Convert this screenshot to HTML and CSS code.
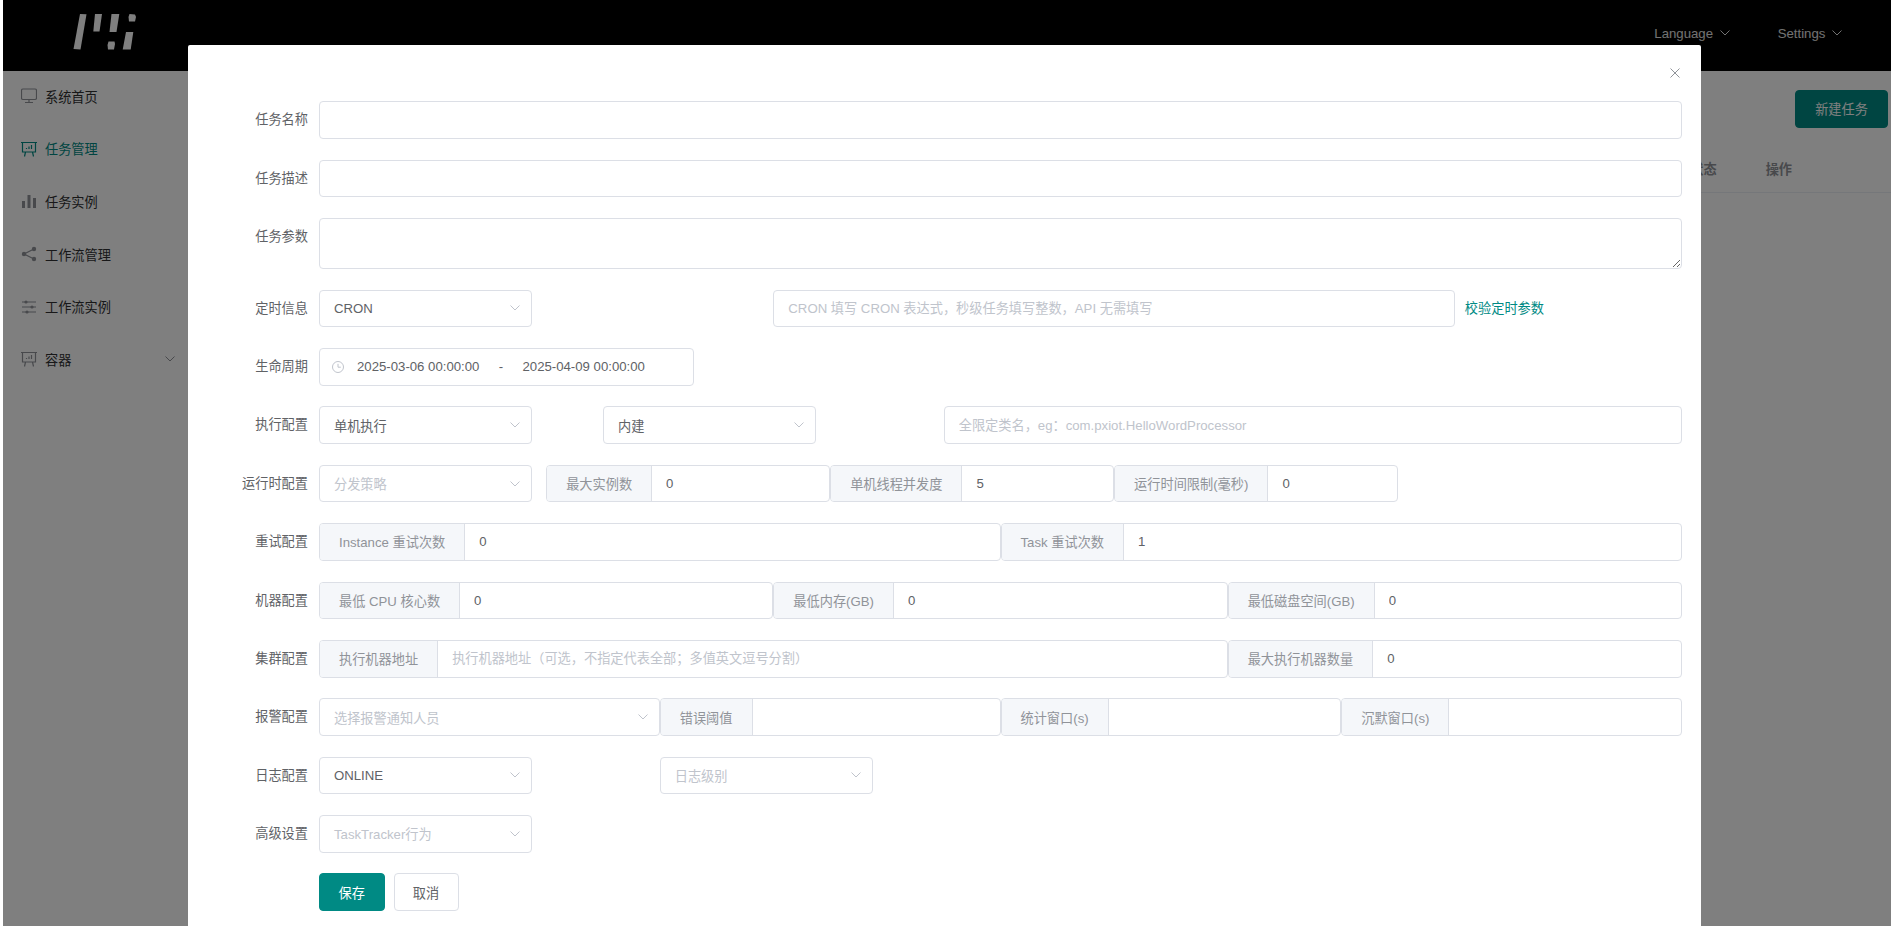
FILE: index.html
```html
<!DOCTYPE html>
<html lang="zh-CN">
<head>
  <meta charset="UTF-8">
  <title>任务管理</title>
  <link rel="stylesheet" href="styles.css">
</head>
<body>
  <!-- top bar -->
  <header class="topbar">
    <svg class="logo" viewBox="0 0 70 40" aria-hidden="true">
      <polygon points="14,0 20.5,0.3 14.5,35.5 7.5,35"/>
      <polygon points="29,0 36,0 33.5,17.5 27.3,17.5"/>
      <polygon points="45.5,0 53.3,0 50.5,18 43.5,18"/>
      <polygon points="63.5,0 69,0.5 70,3 69,7.5 63,7.5 62.5,3"/>
      <polygon points="42.5,27.5 48.5,27.5 49,30 48,35.5 42,35.5 41.5,31"/>
      <polygon points="60,18 67.3,18 64.7,35.5 56.7,35.5"/>
    </svg>
    <nav class="topnav">
      <span class="topnav-item">Language <svg class="chev" viewBox="0 0 10 6"><path d="M0.5 0.5 5 5 9.5 0.5"/></svg></span>
      <span class="topnav-item">Settings <svg class="chev" viewBox="0 0 10 6"><path d="M0.5 0.5 5 5 9.5 0.5"/></svg></span>
    </nav>
  </header>

  <div class="layout">
    <aside class="sidebar">
      <div class="menu-item">
        <svg class="menu-icon" viewBox="0 0 16 16"><rect class="line" x="0.5" y="1" width="15" height="10.5" rx="1.5"/><path class="line" d="M8 11.5V14.5M4 14.5H12"/></svg>
        系统首页
      </div>
      <div class="menu-item active">
        <svg class="menu-icon" viewBox="0 0 16 16"><path class="line" d="M0 1.5H16M1.5 1.5V11H14.5V1.5M4.5 11 3.5 15.5M11.5 11 12.5 15.5"/><path class="line" d="M5.5 8V7M8 8V5.5M10.5 8V4"/></svg>
        任务管理
      </div>
      <div class="menu-item">
        <svg class="menu-icon" viewBox="0 0 16 16"><path d="M1 8H4V15H1ZM6.5 2H9.5V15H6.5ZM12 5H15V15H12Z"/></svg>
        任务实例
      </div>
      <div class="menu-item">
        <svg class="menu-icon" viewBox="0 0 16 16"><circle cx="3" cy="8" r="2.2"/><circle cx="13" cy="3" r="2.2"/><circle cx="13" cy="13" r="2.2"/><path class="line" d="M13 3 3 8 13 13"/></svg>
        工作流管理
      </div>
      <div class="menu-item">
        <svg class="menu-icon" viewBox="0 0 16 16"><path class="line" d="M1 3H15M1 8H15M1 13H15"/><circle cx="5" cy="3" r="1.6"/><circle cx="11" cy="8" r="1.6"/><circle cx="6" cy="13" r="1.6"/></svg>
        工作流实例
      </div>
      <div class="menu-item">
        <svg class="menu-icon" viewBox="0 0 16 16"><path class="line" d="M0 1.5H16M1.5 1.5V11H14.5V1.5M4.5 11 3.5 15.5M11.5 11 12.5 15.5"/><path class="line" d="M5.5 8V7M8 8V5.5M10.5 8V4"/></svg>
        容器
        <svg class="chev menu-chev" viewBox="0 0 10 6"><path d="M0.5 0.5 5 5 9.5 0.5"/></svg>
      </div>
    </aside>

    <main class="content">
      <div class="toolbar">
        <button class="btn-primary btn-new">新建任务</button>
      </div>
      <div class="table-head">
        <span class="th th-status">状态</span>
        <span class="th th-action">操作</span>
      </div>
    </main>
  </div>

  <!-- modal -->
  <div class="overlay">
    <div class="dialog">
      <svg class="dialog-close" viewBox="0 0 10 10"><path d="M0.5 0.5 9.5 9.5M9.5 0.5 0.5 9.5"/></svg>

      <div class="form-row">
        <label class="form-label">任务名称</label>
        <div class="form-grid"><input class="field span-24" type="text"></div>
      </div>
      <div class="form-row">
        <label class="form-label">任务描述</label>
        <div class="form-grid"><input class="field span-24" type="text"></div>
      </div>
      <div class="form-row">
        <label class="form-label">任务参数</label>
        <div class="form-grid"><textarea class="field area span-24"></textarea></div>
      </div>
      <div class="form-row">
        <label class="form-label">定时信息</label>
        <div class="form-grid">
          <div class="span-8"><div class="select">CRON<svg class="chev" viewBox="0 0 10 6"><path d="M0.5 0.5 5 5 9.5 0.5"/></svg></div></div>
          <input class="field span-12" type="text" placeholder="CRON 填写 CRON 表达式，秒级任务填写整数，API 无需填写">
          <a class="link span-4">校验定时参数</a>
        </div>
      </div>
      <div class="form-row">
        <label class="form-label">生命周期</label>
        <div class="form-grid">
          <div class="span-24">
            <div class="date-range">
              <svg class="clock" viewBox="0 0 12 12"><circle cx="6" cy="6" r="5.5"/><path d="M6 2.8V6.2H8.8"/></svg>
              <span class="date-val">2025-03-06 00:00:00</span>
              <span class="date-sep">-</span>
              <span class="date-val">2025-04-09 00:00:00</span>
            </div>
          </div>
        </div>
      </div>
      <div class="form-row">
        <label class="form-label">执行配置</label>
        <div class="form-grid">
          <div class="span-5"><div class="select">单机执行<svg class="chev" viewBox="0 0 10 6"><path d="M0.5 0.5 5 5 9.5 0.5"/></svg></div></div>
          <div class="span-6"><div class="select">内建<svg class="chev" viewBox="0 0 10 6"><path d="M0.5 0.5 5 5 9.5 0.5"/></svg></div></div>
          <input class="field span-13" type="text" placeholder="全限定类名，eg：com.pxiot.HelloWordProcessor">
        </div>
      </div>
      <div class="form-row">
        <label class="form-label">运行时配置</label>
        <div class="form-grid">
          <div class="span-4"><div class="select empty">分发策略<svg class="chev" viewBox="0 0 10 6"><path d="M0.5 0.5 5 5 9.5 0.5"/></svg></div></div>
          <div class="group span-5"><span class="addon">最大实例数</span><input type="text" value="0"></div>
          <div class="group span-5"><span class="addon">单机线程并发度</span><input type="text" value="5"></div>
          <div class="group span-5"><span class="addon">运行时间限制(毫秒)</span><input type="text" value="0"></div>
        </div>
      </div>
      <div class="form-row">
        <label class="form-label">重试配置</label>
        <div class="form-grid">
          <div class="group span-12"><span class="addon">Instance 重试次数</span><input type="text" value="0"></div>
          <div class="group span-12"><span class="addon">Task 重试次数</span><input type="text" value="1"></div>
        </div>
      </div>
      <div class="form-row">
        <label class="form-label">机器配置</label>
        <div class="form-grid">
          <div class="group span-8"><span class="addon">最低 CPU 核心数</span><input type="text" value="0"></div>
          <div class="group span-8"><span class="addon">最低内存(GB)</span><input type="text" value="0"></div>
          <div class="group span-8"><span class="addon">最低磁盘空间(GB)</span><input type="text" value="0"></div>
        </div>
      </div>
      <div class="form-row">
        <label class="form-label">集群配置</label>
        <div class="form-grid">
          <div class="group span-16"><span class="addon">执行机器地址</span><input type="text" placeholder="执行机器地址（可选，不指定代表全部；多值英文逗号分割）"></div>
          <div class="group span-8"><span class="addon">最大执行机器数量</span><input type="text" value="0"></div>
        </div>
      </div>
      <div class="form-row">
        <label class="form-label">报警配置</label>
        <div class="form-grid">
          <div class="span-6"><div class="select wide empty">选择报警通知人员<svg class="chev" viewBox="0 0 10 6"><path d="M0.5 0.5 5 5 9.5 0.5"/></svg></div></div>
          <div class="group span-6"><span class="addon">错误阈值</span><input type="text"></div>
          <div class="group span-6"><span class="addon">统计窗口(s)</span><input type="text"></div>
          <div class="group span-6"><span class="addon">沉默窗口(s)</span><input type="text"></div>
        </div>
      </div>
      <div class="form-row">
        <label class="form-label">日志配置</label>
        <div class="form-grid">
          <div class="span-6"><div class="select">ONLINE<svg class="chev" viewBox="0 0 10 6"><path d="M0.5 0.5 5 5 9.5 0.5"/></svg></div></div>
          <div class="span-6"><div class="select empty">日志级别<svg class="chev" viewBox="0 0 10 6"><path d="M0.5 0.5 5 5 9.5 0.5"/></svg></div></div>
        </div>
      </div>
      <div class="form-row">
        <label class="form-label">高级设置</label>
        <div class="form-grid">
          <div class="span-6"><div class="select empty">TaskTracker行为<svg class="chev" viewBox="0 0 10 6"><path d="M0.5 0.5 5 5 9.5 0.5"/></svg></div></div>
        </div>
      </div>
      <div class="form-row">
        <span class="form-label"></span>
        <div class="form-actions">
          <button class="btn-primary btn-save">保存</button>
          <button class="btn-plain">取消</button>
        </div>
      </div>
    </div>
  </div>
</body>
</html>
```

FILE: styles.css
```css
html, body {
  height: 100%;
  overflow: hidden;
}
body {
  margin: 0;
  padding-left: 3px;
  background: #fff;
  font-family: "Liberation Sans", "Noto Sans CJK SC", sans-serif;
  font-size: 13.2px;
  color: #606266;
}

/* --- chevrons --- */
.chev {
  width: 10px;
  height: 6px;
  fill: none;
  stroke: currentColor;
  stroke-width: 1;
}

/* --- top bar --- */
.topbar {
  height: 71px;
  background: #000;
  display: flex;
  align-items: flex-start;
  justify-content: space-between;
}
.logo {
  width: 70px;
  height: 40px;
  margin: 14px 0 0 63px;
  fill: #fff;
}
.topnav {
  display: flex;
  gap: 48px;
  margin: 25px 49px 0 0;
  color: #e4e4e4;
  line-height: 17px;
}
.topnav-item {
  white-space: nowrap;
}
.topnav-item .chev {
  margin-left: 3px;
  vertical-align: 2px;
}

/* --- page under the modal --- */
.layout {
  display: flex;
}
.sidebar {
  width: 185px;
  margin-top: -1px;
  flex: none;
  color: #303133;
}
.menu-item {
  height: 52.6px;
  display: flex;
  align-items: center;
  padding-left: 18px;
}
.menu-item.active {
  color: #008a84;
}
.menu-item.active .menu-icon {
  color: #008a84;
}
.menu-icon {
  width: 16px;
  height: 16px;
  margin-right: 8px;
  color: #909399;
  fill: currentColor;
}
.menu-icon .line {
  fill: none;
  stroke: currentColor;
  stroke-width: 1.2;
}
.menu-chev {
  margin-left: auto;
  margin-right: 13px;
  color: #909399;
}
.content {
  flex: 1;
  min-width: 0;
}
.toolbar {
  display: flex;
  justify-content: flex-end;
  padding: 19px 3px 0 0;
}
.btn-primary {
  background: #008a84;
  border: 1px solid #008a84;
  border-radius: 4px;
  color: #fff;
  font: inherit;
}
.btn-new {
  width: 93px;
  height: 37.6px;
}
.table-head {
  display: flex;
  justify-content: flex-end;
  height: 46px;
  margin-top: 18px;
  align-items: center;
  border-bottom: 1px solid #ebeef5;
  font-weight: bold;
  color: #909399;
}
.th-status {
  margin-right: 49px;
}
.th-action {
  margin-right: 99px;
}

/* --- modal --- */
.overlay {
  position: fixed;
  top: 0;
  left: 3px;
  right: 0;
  bottom: 0;
  background: rgba(0, 0, 0, 0.5);
}
.dialog {
  position: relative;
  width: 1513px;
  box-sizing: border-box;
  margin: 45px 0 0 185px;
  padding: 56.4px 19px 0;
  height: 900px;
  background: #fff;
  border-radius: 2px;
}
.dialog-close {
  position: absolute;
  top: 23px;
  right: 21px;
  width: 10px;
  height: 10px;
  fill: none;
  stroke: #909399;
  stroke-width: 1;
}

/* --- form --- */
.form-row {
  display: flex;
  margin-bottom: 20.8px;
}
.form-label {
  width: 112px;
  flex: none;
  box-sizing: border-box;
  padding-right: 11px;
  text-align: right;
  line-height: 37.6px;
}
.form-grid {
  flex: 1;
  min-width: 0;
  display: grid;
  grid-template-columns: repeat(24, 1fr);
}
.span-4 { grid-column-end: span 4; }
.span-5 { grid-column-end: span 5; }
.span-6 { grid-column-end: span 6; }
.span-8 { grid-column-end: span 8; }
.span-12 { grid-column-end: span 12; }
.span-13 { grid-column-end: span 13; }
.span-16 { grid-column-end: span 16; }
.span-24 { grid-column-end: span 24; }

input, textarea {
  font: inherit;
  color: #606266;
  outline: none;
}
input::placeholder, textarea::placeholder {
  color: #c0c4cc;
}
.field {
  box-sizing: border-box;
  width: 100%;
  min-width: 0;
  height: 37.6px;
  padding: 0 14px;
  border: 1px solid #dcdfe6;
  border-radius: 4px;
  background: #fff;
}
.area {
  display: block;
  height: 50.6px;
  padding: 5px 14px;
}
.select {
  box-sizing: border-box;
  width: 213px;
  height: 37.6px;
  padding: 0 11px 0 14px;
  display: flex;
  align-items: center;
  justify-content: space-between;
  border: 1px solid #dcdfe6;
  border-radius: 4px;
  background: #fff;
}
.select.wide {
  width: 100%;
}
.select.empty {
  color: #c0c4cc;
}
.select .chev {
  color: #c0c4cc;
}
.link {
  padding-left: 10px;
  line-height: 37.6px;
  color: #008a84;
}
.date-range {
  box-sizing: border-box;
  width: 375px;
  height: 37.6px;
  padding-left: 12px;
  display: flex;
  align-items: center;
  border: 1px solid #dcdfe6;
  border-radius: 4px;
}
.clock {
  width: 12px;
  height: 12px;
  margin-right: 13px;
  fill: none;
  stroke: #c0c4cc;
  stroke-width: 1;
}
.date-sep {
  width: 43px;
  text-align: center;
}

/* --- input + prefix label --- */
.group {
  box-sizing: border-box;
  display: flex;
  min-width: 0;
  height: 37.6px;
  border: 1px solid #dcdfe6;
  border-radius: 4px;
  background: #fff;
  overflow: hidden;
}
.group .addon {
  flex: none;
  padding: 0 19px;
  display: flex;
  align-items: center;
  background: #f5f7fa;
  border-right: 1px solid #dcdfe6;
  color: #909399;
  white-space: nowrap;
}
.group input {
  flex: 1;
  min-width: 0;
  padding: 0 14px;
  border: none;
  background: transparent;
}

/* --- save / cancel --- */
.form-actions {
  display: flex;
  gap: 9px;
}
.btn-save {
  width: 65.5px;
  height: 37.6px;
}
.btn-plain {
  width: 65px;
  height: 37.6px;
  background: #fff;
  border: 1px solid #dcdfe6;
  border-radius: 4px;
  color: #606266;
  font: inherit;
}
```
